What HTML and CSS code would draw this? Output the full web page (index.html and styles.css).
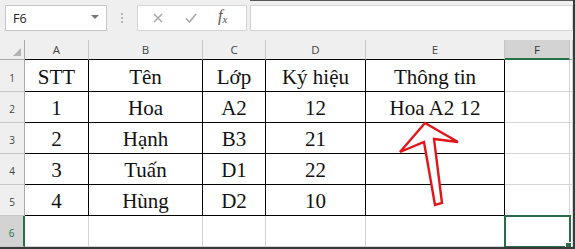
FILE: index.html
```html
<!DOCTYPE html>
<html>

<head>
    <meta charset="utf-8" />
    <title>Excel - Thông tin</title>
    <link rel="stylesheet" href="styles.css">
</head>

<body>
    <div class="frame">
        <div class="toolbar">
            <div class="namebox">
                <span>F6</span>
                <span class="drop"></span>
            </div>
            <div class="grip"><i></i><i></i><i></i></div>
            <div class="fbox">
                <svg class="ico" width="12" height="12" viewBox="0 0 12 12"><path d="M2 2 L10 10 M10 2 L2 10" stroke="#a6a6a6" stroke-width="1.4" fill="none"/></svg>
                <svg class="ico" width="14" height="12" viewBox="0 0 14 12"><path d="M2 6.5 L5.5 10 L12 2" stroke="#a6a6a6" stroke-width="1.6" fill="none"/></svg>
                <span class="fx">f<sub>x</sub></span>
            </div>
            <div class="finput"></div>
        </div>

        <div class="sheet">
            <div class="corner"><span class="tri"></span></div>
            <div class="ch tb">A</div>
            <div class="ch tb">B</div>
            <div class="ch tb">C</div>
            <div class="ch tb">D</div>
            <div class="ch tb">E</div>
            <div class="ch cur">F</div>
            <div class="ch"></div>

            <div class="rh">1</div>
            <div class="c t">STT</div>
            <div class="c t">Tên</div>
            <div class="c t">Lớp</div>
            <div class="c t">Ký hiệu</div>
            <div class="c t">Thông tin</div>
            <div class="c"></div>
            <div class="c"></div>

            <div class="rh">2</div>
            <div class="c t">1</div>
            <div class="c t">Hoa</div>
            <div class="c t">A2</div>
            <div class="c t">12</div>
            <div class="c t">Hoa A2 12</div>
            <div class="c"></div>
            <div class="c"></div>

            <div class="rh">3</div>
            <div class="c t">2</div>
            <div class="c t">Hạnh</div>
            <div class="c t">B3</div>
            <div class="c t">21</div>
            <div class="c t"></div>
            <div class="c"></div>
            <div class="c"></div>

            <div class="rh">4</div>
            <div class="c t">3</div>
            <div class="c t">Tuấn</div>
            <div class="c t">D1</div>
            <div class="c t">22</div>
            <div class="c t"></div>
            <div class="c"></div>
            <div class="c"></div>

            <div class="rh">5</div>
            <div class="c t">4</div>
            <div class="c t">Hùng</div>
            <div class="c t">D2</div>
            <div class="c t">10</div>
            <div class="c t"></div>
            <div class="c"></div>
            <div class="c"></div>

            <div class="rh cur">6</div>
            <div class="c"></div>
            <div class="c"></div>
            <div class="c"></div>
            <div class="c"></div>
            <div class="c"></div>
            <div class="c sel"></div>
            <div class="c"></div>
        </div>

        <!-- mũi tên chỉ vào ô E2 -->
        <svg class="arrow" width="575" height="249" viewBox="0 0 575 249">
            <polygon points="425,123 458,142 434,139 442,203 435,205 424,142 400,152" fill="#fff" stroke="#e3151a" stroke-width="2.4" stroke-linejoin="miter"/>
        </svg>
    </div>
</body>

</html>
```

FILE: styles.css
```css
body {
    margin: 0;
}

.frame {
    position: relative;
    width: 575px;
    height: 249px;
    box-sizing: border-box;
    border-right: 2px solid #3a3a3a;
    border-bottom: 2px solid #3a3a3a;
    background: #efefef;
    overflow: hidden;
    font-family: "Open Sans", "Liberation Sans", sans-serif;
}

/* thanh công thức */
.toolbar {
    position: relative;
    display: flex;
    height: 40px;
    box-sizing: border-box;
    padding: 5px 0 0 5px;
}

.toolbar::before {
    content: "";
    position: absolute;
    top: 0;
    left: 250px;
    right: 0;
    height: 1px;
    background: #555;
}

.namebox {
    display: flex;
    align-items: center;
    justify-content: space-between;
    width: 102px;
    height: 26px;
    box-sizing: border-box;
    border: 1px solid #c6c6c6;
    background: #fff;
    padding: 0 7px 0 7px;
    font-size: 12.5px;
    color: #222;
}

.drop {
    width: 0;
    height: 0;
    border-left: 4px solid transparent;
    border-right: 4px solid transparent;
    border-top: 4px solid #777;
    margin-top: -3px;
}

.grip {
    display: flex;
    flex-direction: column;
    align-items: center;
    justify-content: center;
    gap: 2px;
    width: 30px;
    height: 26px;
}

.grip i {
    width: 2px;
    height: 2px;
    background: #b5b5b5;
}

.fbox {
    display: flex;
    align-items: center;
    width: 110px;
    height: 26px;
    box-sizing: border-box;
    border: 1px solid #d4d4d4;
    background: #fff;
    padding-left: 14px;
}

.ico {
    margin-right: 20px;
}

.ico + .ico {
    margin-right: 20px;
}

.fx {
    font-family: "Liberation Serif", serif;
    font-style: italic;
    font-size: 16px;
    color: #555;
    margin-top: -4px;
}

.fx sub {
    font-size: 11px;
    vertical-align: -2px;
}

.finput {
    flex: 1;
    height: 26px;
    margin-left: 3px;
    box-sizing: border-box;
    border: 1px solid #d4d4d4;
    background: #fff;
}

/* bảng tính */
.sheet {
    display: grid;
    grid-template-columns: 25px 64px 114px 63px 100px 139px 65px 1fr;
    grid-template-rows: 20px 32px 31px 31px 31px 31px 31px;
}

.sheet > div {
    box-sizing: border-box;
    border-right: 1px solid #d4d4d4;
    border-bottom: 1px solid #d4d4d4;
}

.corner {
    position: relative;
    background: #efefef;
    border-right-color: #ababab !important;
    border-bottom-color: #ababab !important;
}

.tri {
    position: absolute;
    right: 3px;
    bottom: 3px;
    width: 0;
    height: 0;
    border-left: 8px solid transparent;
    border-bottom: 8px solid #b4b4b4;
}

.ch {
    display: flex;
    align-items: center;
    justify-content: center;
    background: #efefef;
    border-right-color: #c6c6c6 !important;
    border-bottom-color: #ababab !important;
    font-size: 11.5px;
    color: #444;
}

.ch.tb {
    border-bottom-color: #000 !important;
}

.ch.cur {
    background: #d3d3d3;
    border-bottom: 2px solid #217346 !important;
    color: #333;
}

.rh {
    display: flex;
    align-items: flex-end;
    justify-content: center;
    padding-bottom: 6px;
    background: #efefef;
    border-right-color: #ababab !important;
    border-bottom-color: #c6c6c6 !important;
    font-size: 10px;
    color: #444;
}

.rh.cur {
    background: #d3d3d3;
    border-right: 2px solid #217346 !important;
    color: #217346;
}

.c {
    display: flex;
    align-items: flex-end;
    justify-content: center;
    padding-bottom: 3px;
    background: #fff;
    font-family: "Liberation Serif", "Times New Roman", serif;
    font-size: 21px;
    line-height: 1;
    color: #111;
    white-space: nowrap;
}

.c.t {
    border-right-color: #000;
    border-bottom-color: #000;
}

.c.sel {
    position: relative;
    outline: 2px solid #2b6a4a;
    outline-offset: -1px;
    z-index: 2;
}

.c.sel::after {
    content: "";
    position: absolute;
    right: -3px;
    bottom: -3px;
    width: 5px;
    height: 5px;
    background: #2b6a4a;
    border: 1px solid #fff;
}

.arrow {
    position: absolute;
    left: 0;
    top: 0;
    z-index: 3;
}
```
